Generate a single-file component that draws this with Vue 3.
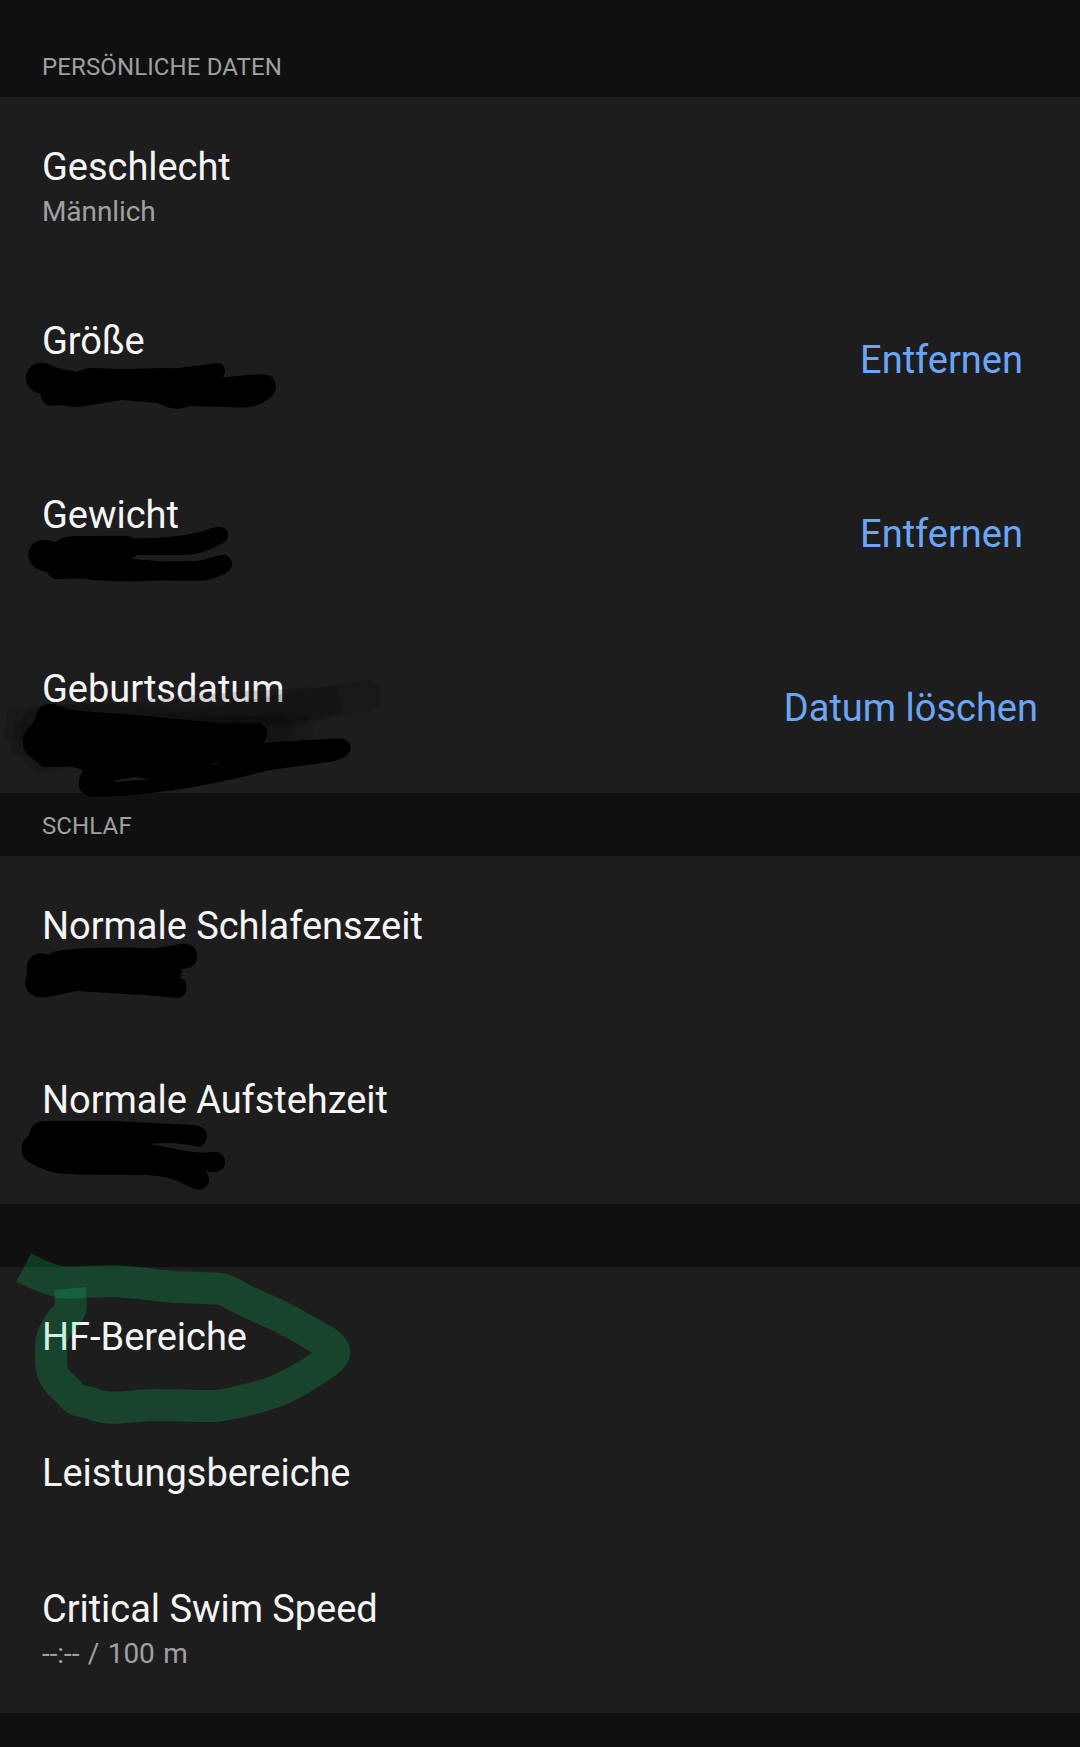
<template>
  <main class="settings">
    <section v-for="(section, i) in sections" :key="i" class="section">
      <h2 :class="['heading', i === 0 && 'first']">{{ section.title }}</h2>
      <div v-for="row in section.rows" :key="row.title" :class="['row', row.single && 'single']">
        <div class="label">
          <div class="title">{{ row.title }}</div>
          <div v-if="row.value" class="value">{{ row.value }}</div>
        </div>
        <button v-if="row.action" :class="['action', row.wide && 'wide']">{{ row.action }}</button>
      </div>
    </section>

    <!-- pen strokes drawn over the list -->
    <svg class="ink" width="1080" height="1747" viewBox="0 0 1080 1747">
      <g v-for="mark in marks" :key="mark.y" :transform="`translate(0 ${mark.y}) scale(.33333)`">
        <path v-for="(d, n) in mark.smudges" :key="n" :d="d" class="smudge" />
        <path :d="mark.d" fill-rule="evenodd" />
      </g>
      <g class="marker" transform="translate(0 1230) scale(.33333)">
        <path class="line" d="M71 112 Q150 153 192 157 C240 158 290 152 350 154 C410 157 465 166 530 171 L660 176 C680 178 702 196 730 209 C770 230 820 245 870 275 C910 296 940 315 974 334 C1012 358 1012 376 974 401 C920 438 865 472 810 490 C750 508 690 524 645 528 C580 530 500 523 440 526 C390 529 340 541 290 526 C262 514 242 515 228 508 C215 498 205 482 185 466 C160 445 153 420 153 385 L153 345 C153 320 165 300 179 280 C200 253 213 245 213 225 L210 175" />
        <path class="overlap" d="M162 180 L258 171 L260 203 Q210 208 165 203 Z" />
      </g>
    </svg>
  </main>
</template>

<script setup>
const sections = [
  {
    title: 'PERSÖNLICHE DATEN',
    rows: [
      { title: 'Geschlecht', value: 'Männlich' },
      { title: 'Größe', action: 'Entfernen' },
      { title: 'Gewicht', action: 'Entfernen' },
      { title: 'Geburtsdatum', action: 'Datum löschen', wide: true },
    ],
  },
  {
    title: 'SCHLAF',
    rows: [{ title: 'Normale Schlafenszeit' }, { title: 'Normale Aufstehzeit' }],
  },
  {
    title: '',
    rows: [
      { title: 'HF-Bereiche', single: true },
      { title: 'Leistungsbereiche', single: true },
      { title: 'Critical Swim Speed', value: '--:-- / 100 m' },
    ],
  },
]

const marks = [
  {
    y: 310,
    d: 'M125 158 C145 158 162 172 185 177 L233 185 C250 178 258 174 280 174 L370 177 L490 174 L528 175 L590 167 L650 159 C670 159 677 174 675 188 L669 202 L720 197 L780 193 C812 192 828 206 828 232 C828 255 800 276 765 287 C745 294 710 293 690 292 L568 288 C550 296 530 299 508 293 C492 289 482 280 465 278 L365 270 L250 289 C225 292 205 293 187 284 L155 288 C134 286 122 270 121 251 C95 245 78 228 78 204 C78 178 98 157 125 158 Z',
  },
  {
    y: 490,
    d: 'M132 149 C145 149 155 152 165 157 C182 143 200 139 220 138 L370 137 C387 137 393 140 402 145 C480 145 550 140 612 122 C635 114 650 109 665 111 C680 114 687 130 684 143 C680 155 665 161 652 168 C610 190 580 195 535 195 L411 195 L396 207 L480 214 L585 213 C620 211 645 195 673 195 C690 198 698 212 696 228 C693 243 665 256 645 264 C620 272 595 274 565 273 L485 271 C400 277 320 274 250 266 L170 267 C155 266 146 257 142 246 C110 242 85 223 85 195 C85 168 106 149 132 149 Z',
  },
  {
    y: 660,
    smudges: [
      'M22 144 L62 149 C76 139 100 137 120 138 L340 127 Q560 108 730 94 L1010 77 L1028 162 Q820 200 700 188 L400 170 L90 245 L12 237 Z',
      'M455 165 C590 149 680 135 760 118 L1090 59 C1125 57 1143 78 1143 109 C1143 136 1124 150 1103 154 L840 205 L650 190 Z',
      'M47 186 L110 195 L780 165 C800 158 815 157 828 158 C862 162 879 185 878 211 C876 235 864 246 850 252 L160 315 L32 280 Z',
      'M62 197 C62 165 87 145 120 140 L240 128 C450 135 620 170 730 168 L890 158 C922 160 939 183 939 210 C937 235 925 245 910 249 L730 270 L120 337 C90 333 70 312 72 282 Z',
    ],
    d: 'M150 131 C175 131 190 145 220 150 C280 158 390 162 450 169 L650 188 L770 189 C793 190 803 206 801 224 C800 236 794 244 788 249 L1010 235 C1035 233 1053 246 1052 264 C1051 282 1031 296 1000 304 L805 331 C710 356 610 379 500 393 C420 404 350 410 290 411 C255 412 236 395 236 372 C237 355 241 342 250 330 L215 319 L135 322 C121 319 115 309 107 303 C84 289 68 270 69 248 C69 223 79 210 91 198 C109 179 102 171 114 153 C120 140 133 131 150 131 Z M338 363 L405 351 L448 358 L350 365 Z M618 314 L657 307 L652 311 Z',
  },
  {
    y: 900,
    d: 'M123 160 L147 164 C158 153 180 151 205 149 C280 142 350 141 465 145 L545 132 C574 128 592 145 592 169 C592 192 574 207 545 207 C546 218 544 226 541 234 C555 239 561 248 560 263 C559 281 549 294 528 294 L440 286 L228 273 L145 291 C105 299 75 279 75 247 Q75 235 81 223 C75 191 91 161 123 160 Z',
  },
  {
    y: 1070,
    d: 'M130 153 L340 153 L580 165 C607 167 621 181 621 200 C620 219 605 233 585 229 C540 218 500 217 450 222 C510 232 560 247 610 248 L638 246 C662 244 675 256 675 275 C675 296 659 308 637 306 L615 304 C625 313 628 322 627 333 C624 353 606 364 583 357 L538 335 C505 323 475 315 420 315 L240 314 C195 312 160 313 125 295 C88 282 64 266 64 238 C64 219 72 208 86 197 C91 171 105 154 130 153 Z',
  },
]
</script>

<style>
body {
  background: #101010;
}
</style>

<style scoped>
.settings {
  position: relative;
  height: 1747px;
  overflow: hidden;
  background: #101010;
  font-family: Roboto, sans-serif;
}
.heading {
  box-sizing: border-box;
  height: 63px;
  margin: 0;
  padding: 19px 42px 0;
  color: #a0a0a0;
  font-size: 24px;
  line-height: 28px;
  font-weight: 400;
  letter-spacing: 0.12px;
}
.heading.first {
  height: 97px;
  padding-top: 53px;
}
.row {
  box-sizing: border-box;
  display: flex;
  justify-content: space-between;
  height: 174px;
  padding: 48px 42px 0;
  background: #1d1d1d;
}
.row.single {
  height: 136px;
}
.title,
.action {
  color: #f5f5f5;
  font-size: 38px;
  line-height: 44px;
}
.title {
  letter-spacing: -0.04px;
}
.value {
  margin-top: 6px;
  color: #a0a0a0;
  font-size: 28px;
  line-height: 33px;
  letter-spacing: -0.08px;
  word-spacing: 1.6px;
}
.action {
  align-self: flex-start;
  margin: 19px 15px 0 0;
  padding: 0;
  border: 0;
  background: none;
  color: #6aa6f8;
  font-family: inherit;
}
.action.wide {
  margin-right: 0;
}
.ink {
  position: absolute;
  top: 0;
  left: 0;
  pointer-events: none;
}
.smudge {
  opacity: 0.14;
}
.marker .line {
  fill: none;
  stroke: rgba(8, 240, 122, 0.185);
  stroke-width: 96;
  stroke-linejoin: round;
}
.marker .overlap {
  fill: rgba(8, 240, 122, 0.185);
}
</style>
